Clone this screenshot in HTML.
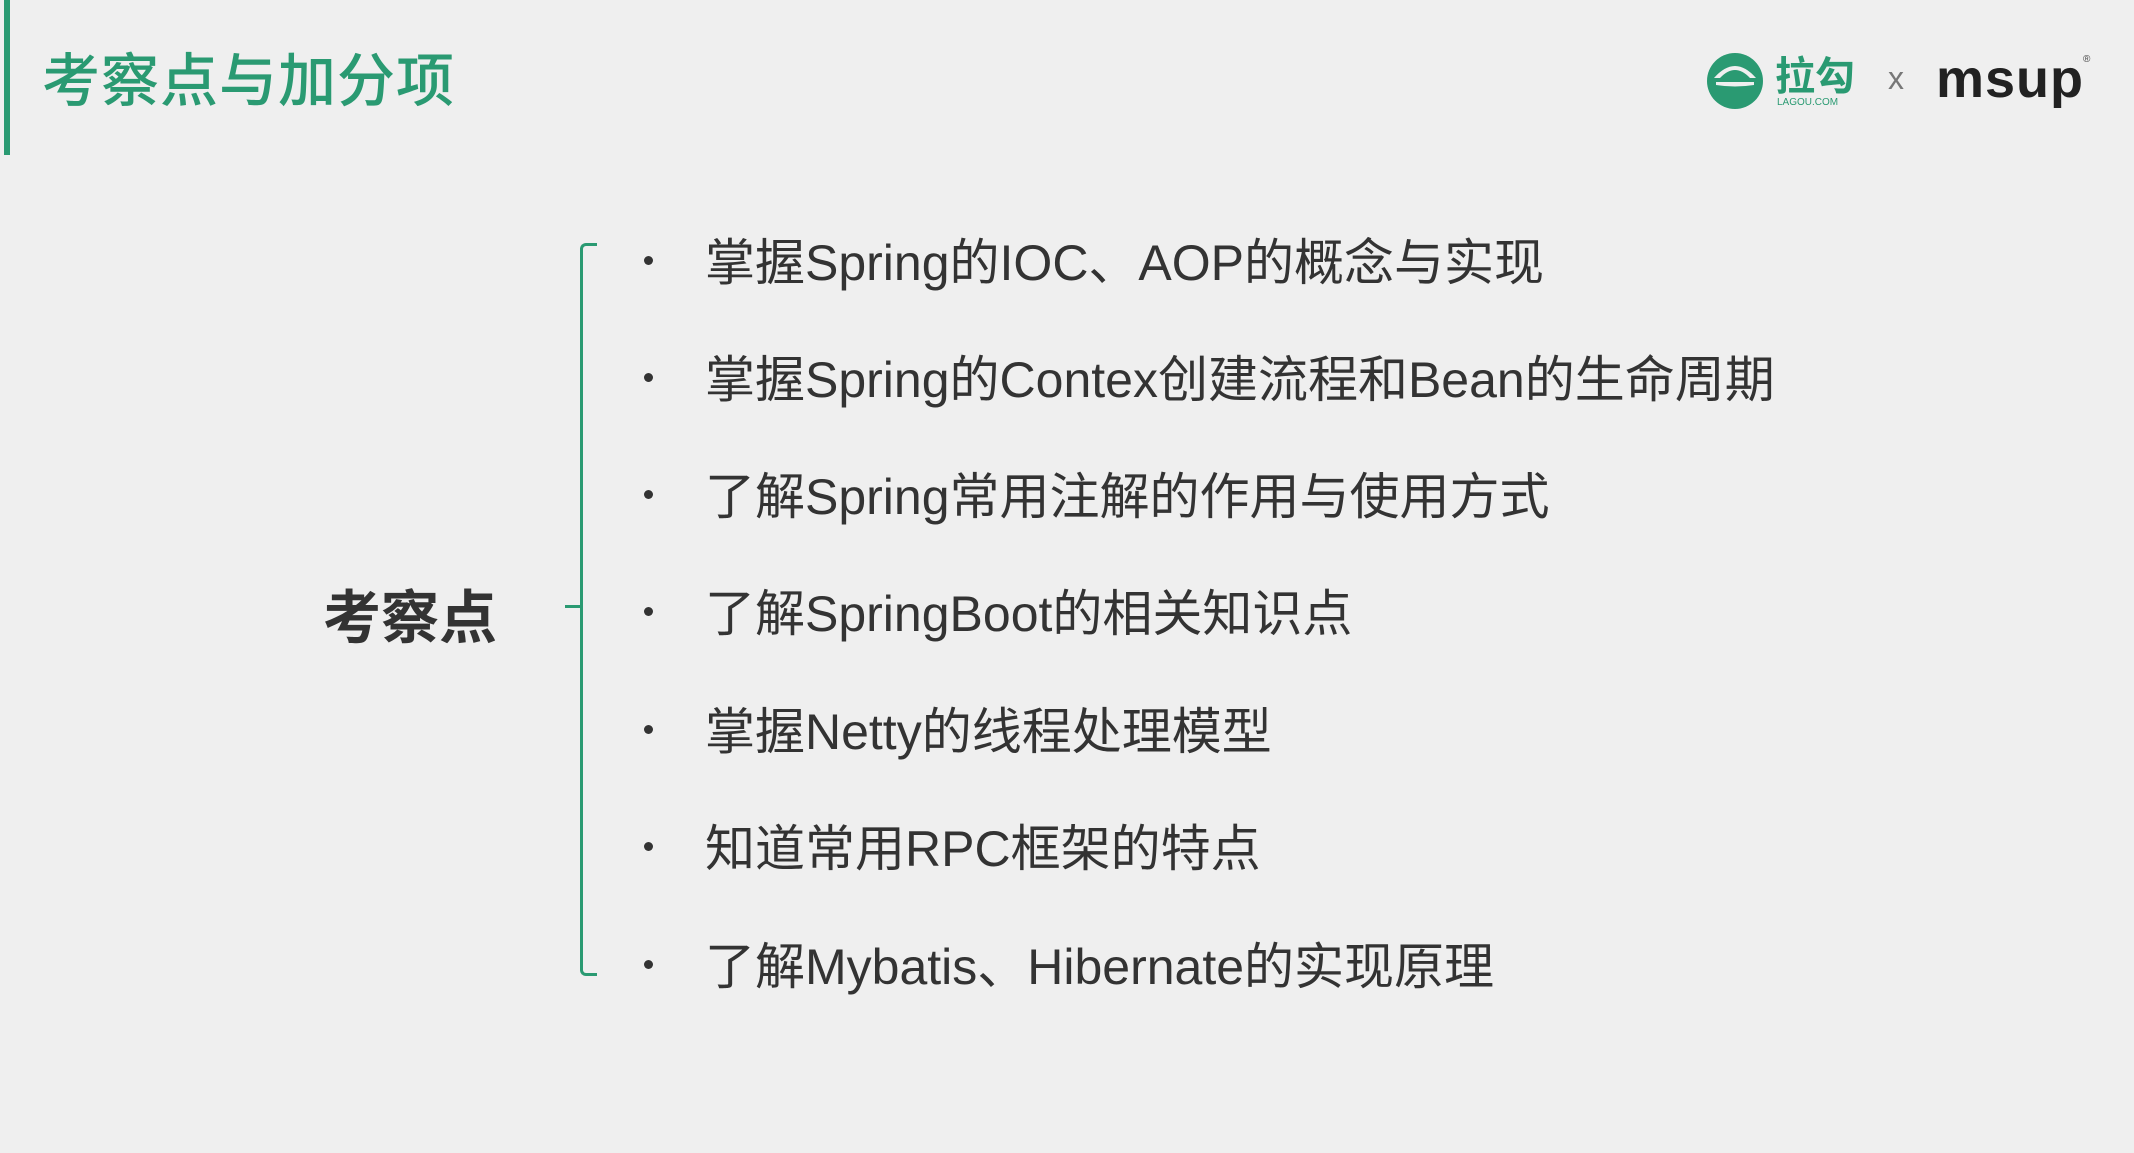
<!DOCTYPE html>
<html><head><meta charset="utf-8"><style>
body{margin:0;width:2134px;height:1153px;background:#efefef;position:relative;overflow:hidden;font-family:"Liberation Sans","Noto Sans CJK SC",sans-serif;}
.bar{position:absolute;left:4px;top:0;width:6px;height:155px;background:#2a9a72;}
.title{position:absolute;left:42px;top:34px;font-size:58px;color:#2a9a72;font-weight:500;letter-spacing:1px;white-space:nowrap;}
.label{position:absolute;left:323px;top:571px;font-size:58px;font-weight:bold;color:#333;white-space:nowrap;}
.br{position:absolute;left:580px;top:243px;width:14px;height:727px;border:3px solid #2a9a72;border-right:none;border-radius:6px 0 0 6px;}
.tick{position:absolute;left:565px;top:605px;width:17px;height:3px;background:#2a9a72;}
.row{position:absolute;left:705px;font-size:50px;color:#333;white-space:nowrap;line-height:60px;}
.dot{position:absolute;left:644px;width:9px;height:9px;border-radius:50%;background:#333;}
</style></head><body>
<div class="bar"></div>
<div class="title">考察点与加分项</div>
<svg style="position:absolute;left:1706px;top:52px" width="58" height="58" viewBox="0 0 58 58"><circle cx="29" cy="29" r="28" fill="#2a9a72"/><path d="M8 26 Q29 2 50 26 L44 26 Q29 10 14 26Z" fill="#efefef"/><path d="M10 30 L48 30 L48 33 Q29 36 10 33Z" fill="#efefef"/></svg>
<div style="position:absolute;left:1775px;top:44px;font-size:40px;font-weight:bold;color:#2a9a72;white-space:nowrap">拉勾</div>
<div style="position:absolute;left:1777px;top:97px;font-size:10px;color:#2a9a72;white-space:nowrap">LAGOU.COM</div>
<div style="position:absolute;left:1888px;top:60px;font-size:32px;color:#777">x</div>
<div style="position:absolute;left:1936px;top:48px;font-size:54px;font-weight:bold;color:#222;letter-spacing:1px">msup</div>
<div style="position:absolute;left:2083px;top:54px;font-size:10px;color:#444">®</div>
<div class="label">考察点</div>
<div class="br"></div><div class="tick"></div>
<div class="dot" style="top:256px"></div><div class="row" style="top:233px">掌握Spring的IOC、AOP的概念与实现</div>
<div class="dot" style="top:373px"></div><div class="row" style="top:350px">掌握Spring的Contex创建流程和Bean的生命周期</div>
<div class="dot" style="top:490px"></div><div class="row" style="top:467px">了解Spring常用注解的作用与使用方式</div>
<div class="dot" style="top:607px"></div><div class="row" style="top:584px">了解SpringBoot的相关知识点</div>
<div class="dot" style="top:725px"></div><div class="row" style="top:702px">掌握Netty的线程处理模型</div>
<div class="dot" style="top:842px"></div><div class="row" style="top:819px">知道常用RPC框架的特点</div>
<div class="dot" style="top:960px"></div><div class="row" style="top:937px">了解Mybatis、Hibernate的实现原理</div>
</body></html>
